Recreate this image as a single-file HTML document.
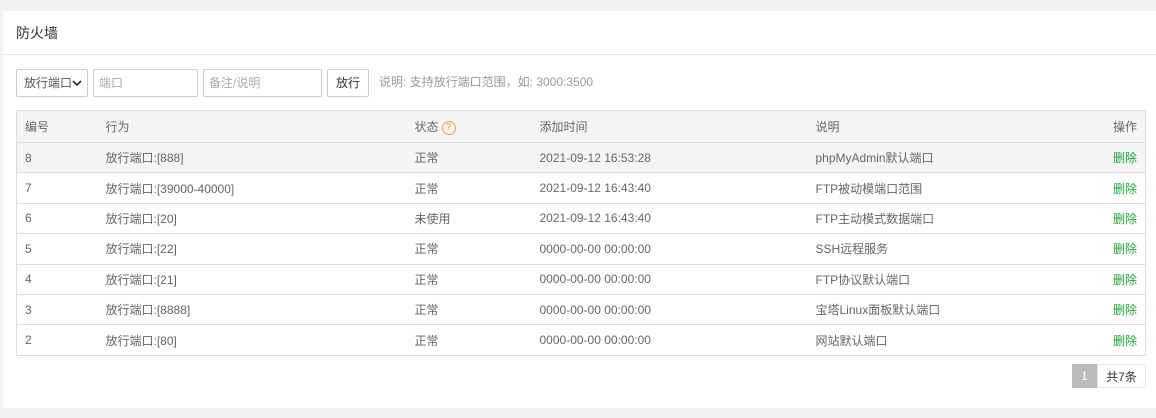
<!DOCTYPE html>
<html><head><meta charset="utf-8"><style>
*{box-sizing:border-box;margin:0;padding:0}
body{width:1156px;height:418px;background:#f2f2f2;font-family:"Liberation Sans","Noto Sans CJK SC",sans-serif;font-size:12px;color:#666;position:relative;overflow:hidden}
.panel{position:absolute;left:3px;top:11px;width:1153px;height:397px;background:#fff}
.hd{height:44px;border-bottom:1px solid #e6e6e6;padding-left:13px;line-height:44px;font-size:14px;color:#333}
.bar{position:absolute;top:58px;left:13px;height:28px;display:flex;align-items:center}
.bar>*{height:28px;border:1px solid #ccc;border-radius:2px;margin-right:5px;font-size:12px;line-height:26px;color:#555}
.sel{width:72px;padding-left:7px;position:relative}
.sel svg{position:absolute;right:5px;top:9px}
.in{color:#aaa;padding-left:5px}
.btn{width:42px;text-align:center;color:#333}
.tip{border:none;color:#999;margin-left:5px}
table{position:absolute;left:13px;top:99px;width:1130px;border-collapse:collapse;border:1px solid #ddd}
td,th{height:30.4px;border-top:1px solid #ddd;text-align:left;font-weight:normal;padding-left:8px;color:#666}
th{height:32px;background:#f5f5f5;color:#666}
tr.h td{background:#f5f5f5}
.r{text-align:right;padding-right:8px}
.del{color:#20a53a}
.q{display:inline-block;width:14px;height:14px;border:1.5px solid #f0a030;border-radius:50%;color:#f0a030;font-size:10px;line-height:11px;text-align:center;vertical-align:middle;margin-left:3px}
.pg{position:absolute;top:353px;left:1069px;display:flex;height:24px}
.pg span{display:block;line-height:24px;height:24px}
.p1{width:25px;background:#bbb;color:#fff;text-align:center}
.p2{width:49px;border:1px solid #e6e6e6;text-align:center;color:#333}
</style></head><body>
<div class="panel">
<div class="hd">防火墙</div>
<div class="bar">
<div class="sel">放行端口<svg width="10" height="8" viewBox="0 0 10 8"><path d="M1 2l4 4 4-4" stroke="#333" stroke-width="1.8" fill="none"/></svg></div>
<div class="in" style="width:105px">端口</div>
<div class="in" style="width:119px">备注/说明</div>
<div class="btn">放行</div>
<div class="tip">说明: 支持放行端口范围，如: 3000:3500</div>
</div>
<table>
<tr><th style="width:81px">编号</th><th style="width:309px">行为</th><th style="width:125px">状态<span class="q">?</span></th><th style="width:276px">添加时间</th><th>说明</th><th class="r">操作</th></tr>
<tr class="h"><td>8</td><td>放行端口:[888]</td><td>正常</td><td>2021-09-12 16:53:28</td><td>phpMyAdmin默认端口</td><td class="r del">删除</td></tr>
<tr><td>7</td><td>放行端口:[39000-40000]</td><td>正常</td><td>2021-09-12 16:43:40</td><td>FTP被动模端口范围</td><td class="r del">删除</td></tr>
<tr><td>6</td><td>放行端口:[20]</td><td>未使用</td><td>2021-09-12 16:43:40</td><td>FTP主动模式数据端口</td><td class="r del">删除</td></tr>
<tr><td>5</td><td>放行端口:[22]</td><td>正常</td><td>0000-00-00 00:00:00</td><td>SSH远程服务</td><td class="r del">删除</td></tr>
<tr><td>4</td><td>放行端口:[21]</td><td>正常</td><td>0000-00-00 00:00:00</td><td>FTP协议默认端口</td><td class="r del">删除</td></tr>
<tr><td>3</td><td>放行端口:[8888]</td><td>正常</td><td>0000-00-00 00:00:00</td><td>宝塔Linux面板默认端口</td><td class="r del">删除</td></tr>
<tr><td>2</td><td>放行端口:[80]</td><td>正常</td><td>0000-00-00 00:00:00</td><td>网站默认端口</td><td class="r del">删除</td></tr>
</table>
<div class="pg"><span class="p1">1</span><span class="p2">共7条</span></div>
</div>
</body></html>
